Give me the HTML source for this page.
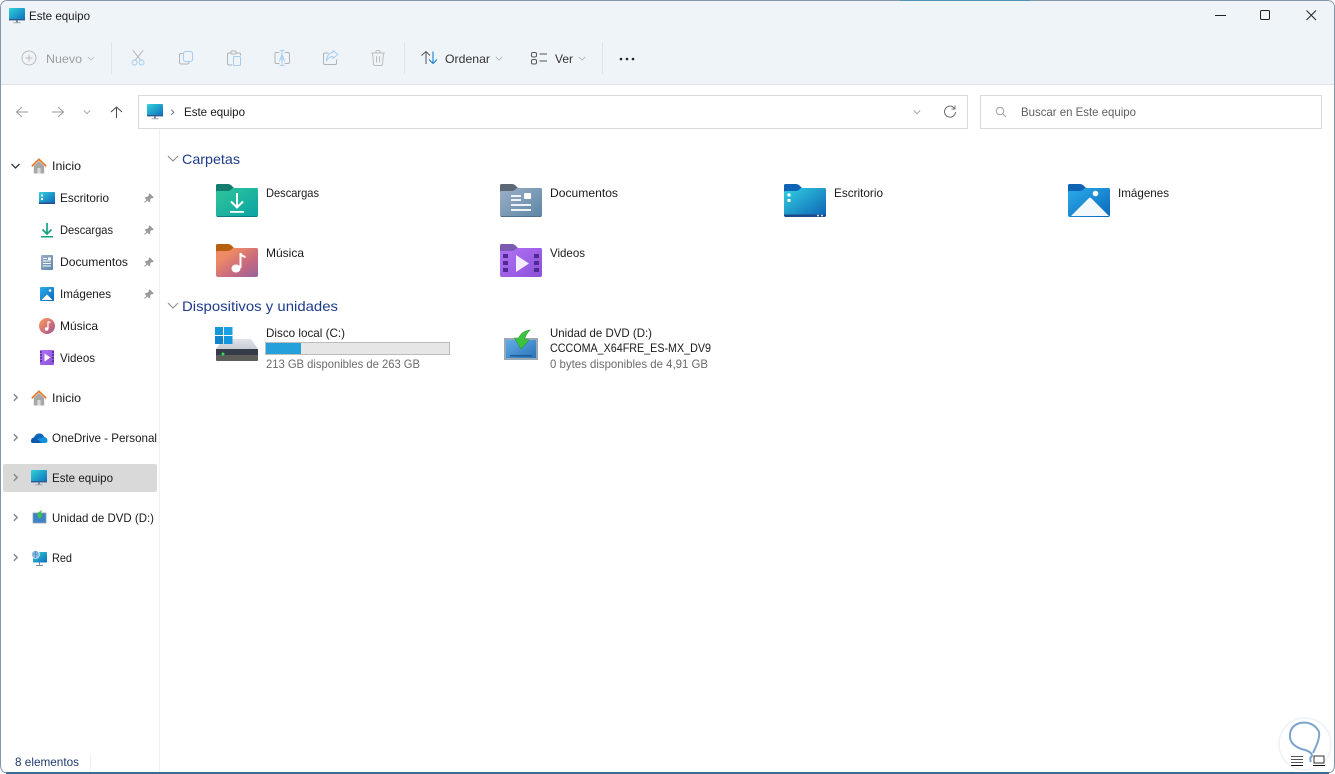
<!DOCTYPE html>
<html lang="es"><head><meta charset="utf-8"><title>Este equipo</title>
<style>
html,body{margin:0;padding:0;width:1335px;height:774px;overflow:hidden;background:#fff}
svg{display:block;position:absolute;left:0;top:0}
text{font-family:"Liberation Sans",sans-serif;font-size:12px;fill:#1a1a1a}
.g{fill:#9c9c9c}.m{fill:#6b6b6b}.h{font-size:14px;fill:#1d3b8b}.s{fill:#5f5f5f}.o{fill:#333}.b{fill:#1f3a6e}
.l{fill:none;stroke-linecap:round;stroke-linejoin:round}
</style></head><body>
<svg width="1335" height="774" viewBox="0 0 1335 774" xmlns="http://www.w3.org/2000/svg">
<defs>
<linearGradient id="mon" x1="0" y1="0" x2="1" y2="1"><stop offset="0" stop-color="#2fd3d8"/><stop offset="1" stop-color="#0f6cbd"/></linearGradient>
<linearGradient id="fg" x1="0" y1="0" x2="1" y2="1"><stop offset="0" stop-color="#2fc79a"/><stop offset="1" stop-color="#0ba2a4"/></linearGradient>
<linearGradient id="fo" x1="0" y1="0" x2="1" y2="1"><stop offset=".25" stop-color="#ec8a66"/><stop offset=".65" stop-color="#c5687f"/><stop offset="1" stop-color="#94639c"/></linearGradient>
<linearGradient id="fd" x1="0" y1="0" x2="1" y2="1"><stop offset="0" stop-color="#9db0c8"/><stop offset="1" stop-color="#5b85a6"/></linearGradient>
<linearGradient id="fv" x1="0" y1="0" x2="1" y2="1"><stop offset="0" stop-color="#b273f5"/><stop offset="1" stop-color="#8b50d8"/></linearGradient>
<linearGradient id="fe" x1="0" y1="0" x2="1" y2="1"><stop offset="0" stop-color="#33d0e0"/><stop offset="1" stop-color="#0c62b5"/></linearGradient>
<linearGradient id="fi" x1="0" y1="0" x2="1" y2="1"><stop offset="0" stop-color="#2bade9"/><stop offset="1" stop-color="#0a68bd"/></linearGradient>
<linearGradient id="hd" x1="0" y1="0" x2="0" y2="1"><stop offset="0" stop-color="#dfe2e7"/><stop offset="1" stop-color="#c9cdd3"/></linearGradient>
<linearGradient id="dv" x1="0" y1="0" x2="1" y2="1"><stop offset="0" stop-color="#62aee8"/><stop offset="1" stop-color="#2a72b8"/></linearGradient>
<symbol id="monitor" viewBox="0 0 16 16"><rect x="0" y="0" width="16" height="12" rx="1" fill="url(#mon)"/><rect x="0" y="11" width="16" height="1.4" fill="#2c5a8e"/><rect x="7" y="12.4" width="2" height="2" fill="#7f8a96"/><rect x="4.5" y="14.2" width="7" height="1" fill="#9aa4ae"/></symbol>
<symbol id="home" viewBox="0 0 16 16"><path d="M2.8 8V15.5H13.2V8L8 3z" fill="#a8a8a8"/><rect x="6.4" y="10" width="3.2" height="5.5" fill="#d8d8d8"/><path d="M.8 8.2L8 1.3L15.2 8.2" fill="none" stroke="#e8772e" stroke-width="1.7"/></symbol>
<symbol id="pin" viewBox="0 0 10 10"><path d="M5.6 .5L9.5 4.4L8.6 5L7.6 4.8L5.9 6.5L5.9 8.4L5 9L1 5L1.6 4.1L3.500 4.1L5.200 2.400L5 1.400z" fill="#9a9a9a" stroke="#9a9a9a" stroke-width=".5"/><path d="M3 7L.5 9.500" stroke="#9a9a9a" stroke-width="1"/></symbol>
<symbol id="chev" viewBox="0 0 10 6"><path d="M1 1L5 5L9 1" fill="none" stroke="#8a8a8a" stroke-width="1"/></symbol>
<symbol id="chr" viewBox="0 0 6 10"><path d="M1 1L5 5L1 9" fill="none" stroke="#8a8a8a" stroke-width="1.800"/></symbol>
</defs>

<path d="M8 .5H1327Q1334.500 .5 1334.500 8V765Q1334.500 773 1327 773H8Q.5 773 .5 765V8Q.5 .5 8 .5Z" fill="#fff" stroke="#8497aa"/>
<path d="M8 1H1327Q1334 1 1334 8V84H1V8Q1 1 8 1Z" fill="#eff4f9"/>
<rect x="1" y="84" width="1333" height="1" fill="#dde1e5"/>
<rect x="6" y="772" width="1323" height="2" fill="#3f6a8f"/>
<rect x="900" y="0" width="130" height="1" fill="#4f93b5"/>

<!-- title bar -->
<use href="#monitor" x="9" y="8" width="16" height="16"/>
<text x="29" y="20" textLength="61" lengthAdjust="spacingAndGlyphs">Este equipo</text>
<rect x="1215" y="15" width="11" height="1" fill="#222"/>
<rect x="1260.5" y="10.5" width="9" height="9" rx="1.2" fill="none" stroke="#222"/>
<path d="M1306.5 10.5L1316 20M1316 10.5L1306.5 20" stroke="#222" stroke-width="1"/>

<!-- toolbar -->
<circle cx="29" cy="58" r="7" fill="none" stroke="#bcbcbc"/>
<path d="M29 54.5V61.5M25.5 58H32.5" stroke="#bcbcbc"/>
<text class="g" x="46" y="63" textLength="36" lengthAdjust="spacingAndGlyphs">Nuevo</text>
<use href="#chev" x="87" y="56" width="8" height="5" opacity=".6"/>
<rect x="111" y="42" width="1" height="32" fill="#e1e4e8"/>
<g class="l" stroke-width="1">
<path d="M133 50.5L141 60.5M143 50.5L135 60.5" stroke="#b3b3b3"/>
<circle cx="134.5" cy="62.5" r="2.5" stroke="#a5cdf2"/><circle cx="141.5" cy="62.5" r="2.5" stroke="#a5cdf2"/>
<path d="M182.5 53.5H181Q179.5 53.5 179.5 55V62Q179.5 64 181.5 64H187Q189 64 189 62.5" stroke="#b3b3b3"/>
<rect x="183.5" y="51.5" width="9" height="10" rx="2" stroke="#a5cdf2"/>
<path d="M230.5 53H229Q227.5 53 227.5 54.5V63.5Q227.5 65 229 65H232M236 53H239.5Q240.5 53 240.5 54.5V55" stroke="#b3b3b3"/>
<rect x="231" y="51" width="5" height="3" rx="1" stroke="#b3b3b3"/>
<rect x="233.5" y="56.5" width="7" height="9" rx="1" stroke="#a5cdf2"/>
<path d="M279 52.5H276Q275 52.5 275 54V62Q275 63.5 276 63.5H279M285 52.5H288Q289.5 52.5 289.5 54V62Q289.5 63.5 288 63.5H285" stroke="#b3b3b3"/>
<path d="M282 50.5V65.5M280 50.5H284M280 65.5H284" stroke="#a5cdf2"/>
<path d="M279.5 61L282 54.5L284.5 61M280.3 59H283.7" stroke="#a5cdf2"/>
<path d="M328 53H325Q323.5 53 323.5 54.5V63Q323.5 64.5 325 64.5H335Q336.5 64.5 336.5 63V60" stroke="#b3b3b3"/>
<path d="M333 50.5L338 54.5L333 58.5V56.5Q328.5 56.5 326.5 61Q327 53 333 52.5Z" stroke="#a5cdf2"/>
<path d="M371.5 53H384.5M376 53V51.5Q376 50.5 377 50.5H379Q380 50.5 380 51.5V53M372.5 53L373.5 64Q373.6 65.5 375 65.5H381Q382.4 65.5 382.5 64L383.5 53M376.5 56.5V62M379.5 56.5V62" stroke="#bdbdbd"/>
</g>
<rect x="404" y="42" width="1" height="32" fill="#e1e4e8"/>
<path d="M421.5 55.5L426 51.5L430 55.5M426 51.5V64" fill="none" stroke="#555" stroke-width="1"/>
<path d="M429 59.5L433 63.5L437 59.5M433 51.5V63.5" fill="none" stroke="#1a7fd0" stroke-width="1.1"/>
<text class="o" x="445" y="63" textLength="45" lengthAdjust="spacingAndGlyphs">Ordenar</text>
<use href="#chev" x="495" y="56" width="8" height="5" opacity=".7"/>
<rect x="531.5" y="52.5" width="5" height="4.5" rx="1.5" fill="none" stroke="#555"/>
<rect x="531.5" y="59.5" width="5" height="4.5" rx="1.5" fill="none" stroke="#555"/>
<path d="M539.5 54H547M539.5 61H547" stroke="#555"/>
<text class="o" x="555" y="63" textLength="18" lengthAdjust="spacingAndGlyphs">Ver</text>
<use href="#chev" x="578" y="56" width="8" height="5" opacity=".7"/>
<rect x="602" y="42" width="1" height="32" fill="#e1e4e8"/>
<circle cx="621" cy="59" r="1.3" fill="#222"/><circle cx="627" cy="59" r="1.3" fill="#222"/><circle cx="633" cy="59" r="1.3" fill="#222"/>

<!-- nav -->
<path d="M28 112H17M22 107L16.500 112L22 117" fill="none" stroke="#9a9a9a" stroke-width="1"/>
<path d="M52 112H63M58 107L63.500 112L58 117" fill="none" stroke="#9a9a9a" stroke-width="1"/>
<use href="#chev" x="83" y="109.500" width="8" height="5"/>
<path d="M116.500 118V107M111 112L116.500 107L122 112" fill="none" stroke="#4a4a4a" stroke-width="1"/>
<rect x="138.500" y="95.500" width="829" height="33" fill="#fff" stroke="#dadada"/>
<use href="#monitor" x="147" y="104" width="16" height="16"/>
<use href="#chr" x="170.500" y="109" width="4" height="6.500"/>
<text x="184" y="116" textLength="61" lengthAdjust="spacingAndGlyphs">Este equipo</text>
<use href="#chev" x="913" y="109.500" width="8" height="5"/>
<path d="M954.500 108.500A5.500 5.500 0 1 0 955.500 112M955 105.500V109H951.500" fill="none" stroke="#6d6d6d" stroke-width="1"/>
<rect x="980.500" y="95.500" width="341" height="33" fill="#fff" stroke="#dadada"/>
<circle cx="1000" cy="111" r="3.700" fill="none" stroke="#a0a0a0"/><path d="M1002.800 113.800L1006 117" stroke="#a0a0a0"/>
<text class="s" x="1021" y="116" textLength="115" lengthAdjust="spacingAndGlyphs">Buscar en Este equipo</text>

<!-- sidebar -->
<rect x="159" y="129" width="1" height="643" fill="#f1f1f1"/>
<rect x="3" y="464" width="154" height="28" rx="2" fill="#d9d9d9"/>
<path d="M11.500 164L15.500 168L19.500 164" fill="none" stroke="#333" stroke-width="1.300"/>
<use href="#home" x="31" y="158" width="16" height="16"/>
<text x="52" y="170" textLength="29" lengthAdjust="spacingAndGlyphs">Inicio</text>

<rect x="39" y="192" width="16" height="12" rx="1" fill="url(#fe)"/><rect x="39" y="202.500" width="16" height="1.500" fill="#254f8c"/><rect x="41" y="194.500" width="2" height="2" fill="#fff"/><rect x="41" y="198" width="2" height="2" fill="#fff"/>
<text x="60" y="202" textLength="49" lengthAdjust="spacingAndGlyphs">Escritorio</text>
<use href="#pin" x="144" y="193" width="10" height="10"/>

<path d="M47 223V233.500M42.500 229.500L47 234L51.500 229.500" fill="none" stroke="#16a082" stroke-width="1.700"/><rect x="41" y="236" width="12" height="1.500" fill="#16a082"/>
<text x="60" y="234" textLength="53" lengthAdjust="spacingAndGlyphs">Descargas</text>
<use href="#pin" x="144" y="225" width="10" height="10"/>

<rect x="41" y="255" width="12" height="15" rx="1" fill="url(#fd)"/><path d="M43 258.500H47M43 261H51M43 263.500H51M43 266H51" stroke="#fff" stroke-width=".9"/><rect x="48" y="257.500" width="3" height="2.500" fill="#fff"/>
<text x="60" y="266" textLength="68" lengthAdjust="spacingAndGlyphs">Documentos</text>
<use href="#pin" x="144" y="257" width="10" height="10"/>

<rect x="40" y="287" width="14" height="14" rx="1" fill="url(#fi)"/><path d="M41.500 300L47 294.500L52.500 300Z" fill="#fff"/><circle cx="50" cy="290.500" r="1.300" fill="#fff"/>
<text x="60" y="298" textLength="51" lengthAdjust="spacingAndGlyphs">Imágenes</text>
<use href="#pin" x="144" y="289" width="10" height="10"/>

<circle cx="47" cy="326" r="8" fill="url(#fo)"/><path d="M48 321.500V329" stroke="#fff" stroke-width="1.200"/><circle cx="46.500" cy="329" r="1.800" fill="#fff"/><path d="M48 321.500L50.500 322.500" stroke="#fff" stroke-width="1.200"/>
<text x="60" y="330" textLength="38" lengthAdjust="spacingAndGlyphs">Música</text>

<rect x="40" y="350" width="14" height="15" rx="1" fill="url(#fv)"/><path d="M40 352H42M40 355H42M40 358H42M40 361H42M52 352H54M52 355H54M52 358H54M52 361H54" stroke="#4f2a92" stroke-width="1.500"/><path d="M44.500 353.500L50.500 357.500L44.500 361.500Z" fill="#fff"/>
<text x="60" y="362" textLength="35" lengthAdjust="spacingAndGlyphs">Videos</text>

<use href="#chr" x="13" y="393" width="5" height="9"/>
<use href="#home" x="31" y="390" width="16" height="16"/>
<text x="52" y="402" textLength="29" lengthAdjust="spacingAndGlyphs">Inicio</text>
<use href="#chr" x="13" y="433" width="5" height="9"/>
<path d="M31 441Q31 438 34 437.500Q36 433 40 433.500Q43 434 44 437Q47.500 437.500 47.500 440.500Q47.500 443 45 443H33Q31 443 31 441Z" fill="#1490df"/><path d="M34 437.500Q36 433 40 433.500Q43 434 44 437L37 439Z" fill="#0f64b5"/><path d="M31 441Q31 438 34 437.500L37 439L42 443H33Q31 443 31 441Z" fill="#0a5cab"/>
<text x="52" y="442" textLength="105" lengthAdjust="spacingAndGlyphs">OneDrive - Personal</text>
<use href="#chr" x="13" y="473" width="5" height="9"/>
<use href="#monitor" x="31" y="470" width="16" height="16"/>
<text x="52" y="482" textLength="61" lengthAdjust="spacingAndGlyphs">Este equipo</text>
<use href="#chr" x="13" y="513" width="5" height="9"/>
<rect x="33" y="513" width="13" height="10" fill="#3b83c6" stroke="#8fa1b5" stroke-width=".8"/><path d="M42 510L38 512.500L38.500 514L36.500 514.500L39.500 519L43 515L41 514.500Q41 512 42 510Z" fill="#3fc04a"/>
<text x="52" y="522" textLength="102" lengthAdjust="spacingAndGlyphs">Unidad de DVD (D:)</text>
<use href="#chr" x="13" y="553" width="5" height="9"/>
<rect x="33" y="552" width="14" height="10.500" rx=".8" fill="url(#mon)"/><path d="M39.500 562.500V565M36 565.500H43" stroke="#7f8a96"/><circle cx="35.500" cy="554.500" r="4" fill="#8fb9e0" stroke="#fff" stroke-width=".6"/><path d="M33 554H38M35.500 551V558" stroke="#3a78b8" stroke-width=".6"/>
<text x="52" y="562" textLength="20" lengthAdjust="spacingAndGlyphs">Red</text>

<!-- headers -->
<path d="M168 156L173 161L178 156" fill="none" stroke="#8a8a8a"/>
<text class="h" x="182" y="164" textLength="58" lengthAdjust="spacingAndGlyphs">Carpetas</text>
<path d="M168 303L173 308L178 303" fill="none" stroke="#8a8a8a"/>
<text class="h" x="182" y="311" textLength="156" lengthAdjust="spacingAndGlyphs">Dispositivos y unidades</text>

<!-- folders -->
<g transform="translate(216,184)">
<path d="M1.500 0H12Q14 0 16 2L18 4V12H0V1.500Q0 0 1.500 0Z" fill="#137c6f"/>
<path d="M0 8.500Q0 7 1.500 7H12Q14 7 15.500 5.500L17 4H40.500Q42 4 42 5.500V31Q42 33 40 33H2Q0 33 0 31Z" fill="url(#fg)"/>
<path d="M21 9V23M15 17.500L21 23.500L27 17.500" fill="none" stroke="#fff" stroke-width="2"/><rect x="14" y="27" width="14" height="1.800" fill="#fff"/>
<rect x="1" y="32" width="40" height="1" fill="#0b7d80"/>
</g>
<g transform="translate(500,184)">
<path d="M1.500 0H12Q14 0 16 2L18 4V12H0V1.500Q0 0 1.500 0Z" fill="#5c6875"/>
<path d="M0 8.500Q0 7 1.500 7H12Q14 7 15.500 5.500L17 4H40.500Q42 4 42 5.500V31Q42 33 40 33H2Q0 33 0 31Z" fill="url(#fd)"/>
<path d="M11 12H21M11 16H21M11 21H31M11 26H31" stroke="#fff" stroke-width="1.700"/><rect x="24" y="9" width="7" height="6" rx=".8" fill="#fff"/>
<rect x="1" y="32" width="40" height="1" fill="#4f708f"/>
</g>
<g transform="translate(784,184)">
<path d="M1.500 0H12Q14 0 16 2L18 4V12H0V1.500Q0 0 1.500 0Z" fill="#0f63b5"/>
<path d="M0 8.500Q0 7 1.500 7H12Q14 7 15.500 5.500L17 4H40.500Q42 4 42 5.500V31Q42 33 40 33H2Q0 33 0 31Z" fill="url(#fe)"/>
<path d="M0 30.500H42V31Q42 33 40 33H2Q0 33 0 31Z" fill="#20478a"/>
<rect x="3.500" y="9.500" width="3" height="3" fill="#fff"/><rect x="3.500" y="15" width="3" height="3" fill="#fff"/>
<rect x="33" y="30.800" width="2" height="1.500" fill="#cfe2f5"/><rect x="37" y="30.800" width="2" height="1.500" fill="#cfe2f5"/>
</g>
<g transform="translate(1068,184)">
<path d="M1.500 0H12Q14 0 16 2L18 4V12H0V1.500Q0 0 1.500 0Z" fill="#0f63b5"/>
<path d="M0 8.500Q0 7 1.500 7H12Q14 7 15.500 5.500L17 4H40.500Q42 4 42 5.500V31Q42 33 40 33H2Q0 33 0 31Z" fill="url(#fi)"/>
<path d="M3 32L21 14Q22 13 23 14L41 32Z" fill="#f3f8fd"/>
<circle cx="27.500" cy="9.500" r="2.800" fill="#fff"/>
</g>
<g transform="translate(216,244)">
<path d="M1.500 0H12Q14 0 16 2L18 4V12H0V1.500Q0 0 1.500 0Z" fill="#b5600f"/>
<path d="M0 8.500Q0 7 1.500 7H12Q14 7 15.500 5.500L17 4H40.500Q42 4 42 5.500V31Q42 33 40 33H2Q0 33 0 31Z" fill="url(#fo)"/>
<path d="M24.500 9V24" stroke="#fff" stroke-width="2"/><ellipse cx="20" cy="24.500" rx="4.500" ry="4" fill="#fff"/><path d="M24.500 9Q25 12 29.500 13" fill="none" stroke="#fff" stroke-width="2"/>
</g>
<g transform="translate(500,244)">
<path d="M1.500 0H12Q14 0 16 2L18 4V12H0V1.500Q0 0 1.500 0Z" fill="#7a5bb0"/>
<path d="M0 8.500Q0 7 1.500 7H12Q14 7 15.500 5.500L17 4H40.500Q42 4 42 5.500V31Q42 33 40 33H2Q0 33 0 31Z" fill="url(#fv)"/>
<path d="M3 10H8V14H3ZM3 17H8V21H3ZM3 24H8V28H3ZM34 10H39V14H34ZM34 17H39V21H34ZM34 24H39V28H34Z" fill="#4f2a92"/>
<path d="M16 11L29 19.500L16 28Z" fill="#f3ecfc"/>
</g>

<text x="266" y="197" textLength="53" lengthAdjust="spacingAndGlyphs">Descargas</text>
<text x="550" y="197" textLength="68" lengthAdjust="spacingAndGlyphs">Documentos</text>
<text x="834" y="197" textLength="49" lengthAdjust="spacingAndGlyphs">Escritorio</text>
<text x="1118" y="197" textLength="51" lengthAdjust="spacingAndGlyphs">Imágenes</text>
<text x="266" y="257" textLength="38" lengthAdjust="spacingAndGlyphs">Música</text>
<text x="550" y="257" textLength="35" lengthAdjust="spacingAndGlyphs">Videos</text>

<!-- drive C -->
<path d="M216 349L223 339H251L258 349Z" fill="url(#hd)"/>
<rect x="216" y="349" width="42" height="7" fill="#353b48"/><rect x="216" y="355" width="42" height="6" rx="1" fill="#5d5d5a"/>
<circle cx="223" cy="354" r="1.500" fill="#35e04c"/>
<rect x="215" y="327" width="8" height="8" fill="#1496dc"/><rect x="224" y="327" width="8.500" height="8" fill="#1a9fe3"/><rect x="215" y="336" width="8" height="8" fill="#0f84cf"/><rect x="224" y="336" width="8.500" height="8" fill="#1496dc"/>
<text x="266" y="337" textLength="79" lengthAdjust="spacingAndGlyphs">Disco local (C:)</text>
<rect x="265.500" y="342.500" width="184" height="12" fill="#e6e6e6" stroke="#bcbcbc"/>
<rect x="266" y="343" width="35" height="11" fill="#26a0da"/>
<text class="m" x="266" y="368" textLength="154" lengthAdjust="spacingAndGlyphs">213 GB disponibles de 263 GB</text>

<!-- DVD -->
<rect x="504.500" y="338.500" width="33" height="21" fill="#9aa7b4" stroke="#9aa7b4"/>
<rect x="506" y="340" width="30" height="18" fill="url(#dv)"/>
<rect x="510" y="355" width="22" height="1.500" fill="#1f5a96"/>
<path d="M530 330Q522 331 518.500 338L514.500 338L521 349L529 340L524.500 339Q526 334 530 330Z" fill="#3dc43f" stroke="#2c9a34" stroke-width=".6"/>
<text x="550" y="337" textLength="102" lengthAdjust="spacingAndGlyphs">Unidad de DVD (D:)</text>
<text x="550" y="352" textLength="161" lengthAdjust="spacingAndGlyphs">CCCOMA_X64FRE_ES-MX_DV9</text>
<text class="m" x="550" y="368" textLength="158" lengthAdjust="spacingAndGlyphs">0 bytes disponibles de 4,91 GB</text>

<!-- status -->
<text class="b" x="15" y="766" textLength="64" lengthAdjust="spacingAndGlyphs">8 elementos</text>
<rect x="90" y="755" width="1" height="16" fill="#f0f0f0"/>

<!-- watermark -->
<circle cx="1305" cy="744" r="26" fill="#fff" stroke="#eef2f6" stroke-width="1.500"/>
<path d="M1313 753Q1322 735 1318 730Q1312 721 1300 723Q1289 726 1290 738Q1292 747 1305 750Q1312 752 1312 756Q1309 758 1311 762" fill="none" stroke="#7ba3cc" stroke-width="2"/>
<path d="M1291 756.500H1303M1291 759.500H1303M1291 762.500H1303" stroke="#555" stroke-width="1"/><path d="M1291 765.500H1303" stroke="#111" stroke-width="1"/>
<rect x="1314" y="756" width="10" height="7" fill="none" stroke="#333"/><path d="M1313 765.500H1325" stroke="#111"/>
</svg>
</body></html>
